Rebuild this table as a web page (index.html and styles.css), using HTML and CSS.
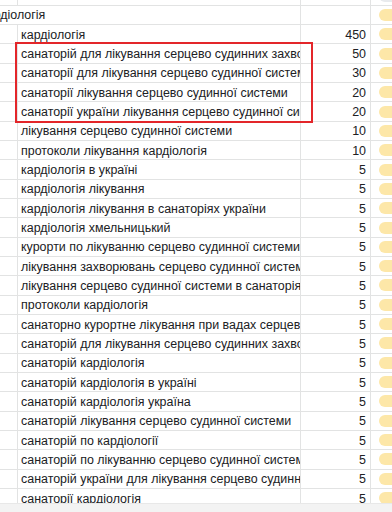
FILE: index.html
```html
<!DOCTYPE html>
<html lang="uk">
<head>
<meta charset="utf-8">
<title>Sheet</title>
<link rel="stylesheet" href="styles.css">
</head>
<body>
<div class="app">
  <div class="viewport">
    <div class="sheet">
      <div class="c a"></div><div class="c b"></div><div class="c n"></div><div class="c d"><span class="pill gray"></span></div>

      <div class="c ab">кардіологія</div><div class="c n"></div><div class="c d"><span class="pill"></span></div>

      <div class="c a"></div><div class="c b">кардіологія</div><div class="c n">450</div><div class="c d"><span class="pill"></span></div>
      <div class="c a"></div><div class="c b">санаторій для лікування серцево судинних захворювань</div><div class="c n">50</div><div class="c d"><span class="pill"></span></div>
      <div class="c a"></div><div class="c b">санаторії для лікування серцево судинної системи</div><div class="c n">30</div><div class="c d"><span class="pill"></span></div>
      <div class="c a"></div><div class="c b">санаторії лікування серцево судинної системи</div><div class="c n">20</div><div class="c d"><span class="pill"></span></div>
      <div class="c a"></div><div class="c b">санаторії україни лікування серцево судинної системи</div><div class="c n">20</div><div class="c d"><span class="pill"></span></div>
      <div class="c a"></div><div class="c b">лікування серцево судинної системи</div><div class="c n">10</div><div class="c d"><span class="pill"></span></div>
      <div class="c a"></div><div class="c b">протоколи лікування кардіологія</div><div class="c n">10</div><div class="c d"><span class="pill"></span></div>
      <div class="c a"></div><div class="c b">кардіологія в україні</div><div class="c n">5</div><div class="c d"><span class="pill"></span></div>
      <div class="c a"></div><div class="c b">кардіологія лікування</div><div class="c n">5</div><div class="c d"><span class="pill"></span></div>
      <div class="c a"></div><div class="c b">кардіологія лікування в санаторіях україни</div><div class="c n">5</div><div class="c d"><span class="pill"></span></div>
      <div class="c a"></div><div class="c b">кардіологія хмельницький</div><div class="c n">5</div><div class="c d"><span class="pill"></span></div>
      <div class="c a"></div><div class="c b">курорти по лікуванню серцево судинної системи</div><div class="c n">5</div><div class="c d"><span class="pill"></span></div>
      <div class="c a"></div><div class="c b">лікування захворювань серцево судинної системи</div><div class="c n">5</div><div class="c d"><span class="pill"></span></div>
      <div class="c a"></div><div class="c b">лікування серцево судинної системи в санаторіях</div><div class="c n">5</div><div class="c d"><span class="pill"></span></div>
      <div class="c a"></div><div class="c b">протоколи кардіологія</div><div class="c n">5</div><div class="c d"><span class="pill"></span></div>
      <div class="c a"></div><div class="c b">санаторно курортне лікування при вадах серцево судинної системи</div><div class="c n">5</div><div class="c d"><span class="pill"></span></div>
      <div class="c a"></div><div class="c b">санаторій для лікування серцево судинних захворювань</div><div class="c n">5</div><div class="c d"><span class="pill"></span></div>
      <div class="c a"></div><div class="c b">санаторій кардіологія</div><div class="c n">5</div><div class="c d"><span class="pill"></span></div>
      <div class="c a"></div><div class="c b">санаторій кардіологія в україні</div><div class="c n">5</div><div class="c d"><span class="pill"></span></div>
      <div class="c a"></div><div class="c b">санаторій кардіологія україна</div><div class="c n">5</div><div class="c d"><span class="pill"></span></div>
      <div class="c a"></div><div class="c b">санаторій лікування серцево судинної системи</div><div class="c n">5</div><div class="c d"><span class="pill"></span></div>
      <div class="c a"></div><div class="c b">санаторій по кардіології</div><div class="c n">5</div><div class="c d"><span class="pill"></span></div>
      <div class="c a"></div><div class="c b">санаторій по лікуванню серцево судинної системи</div><div class="c n">5</div><div class="c d"><span class="pill"></span></div>
      <div class="c a"></div><div class="c b">санаторій україни для лікування серцево судинної системи</div><div class="c n">5</div><div class="c d"><span class="pill"></span></div>
      <div class="c a"></div><div class="c b">санаторії кардіологія</div><div class="c n">5</div><div class="c d"><span class="pill"></span></div>
      <div class="c a"></div><div class="c b"></div><div class="c n"></div><div class="c d"><span class="pill"></span></div>
    </div>
    <div class="highlight"></div>
  </div>
  <div class="hscroll"></div>
</div>
</body>
</html>
```

FILE: styles.css
```css
html, body {
  margin: 0;
  padding: 0;
  background: #ffffff;
  overflow: hidden;
}

.app {
  width: 392px;
  height: 512px;
  display: flex;
  flex-direction: column;
}

.viewport {
  position: relative;
  flex: 1 1 auto;
  overflow: hidden;
}

.sheet {
  display: grid;
  grid-template-columns: 40px 283px 70px 60px;
  grid-auto-rows: 19.33px;
  margin-left: -22px;
  margin-top: -13.6px;
  font-family: "Liberation Sans", Arial, sans-serif;
  font-size: 12.45px;
  color: #202124;
}

.c {
  box-sizing: border-box;
  border-right: 1px solid #e2e3e3;
  border-bottom: 1px solid #e2e3e3;
  padding: 0 3px;
  white-space: nowrap;
  overflow: hidden;
  display: flex;
  align-items: center;
  min-width: 0;
  padding-top: 1px;
}

.ab {
  grid-column: span 2;
  padding-left: 3px;
}

.n {
  justify-content: flex-end;
  padding-right: 4px;
}

.d {
  padding-left: 8px;
  padding-right: 0;
  padding-top: 0;
}

.pill {
  display: block;
  width: 60px;
  height: 12px;
  flex: none;
  border-radius: 6px;
  background: #fde7a8;
}

.pill.gray {
  background: #e8eaed;
}

.highlight {
  position: absolute;
  left: 15px;
  top: 42px;
  width: 298px;
  height: 81px;
  box-sizing: border-box;
  border: 2px solid #e3262a;
  pointer-events: none;
}

.hscroll {
  flex: 0 0 9px;
  box-sizing: border-box;
  background: #f3f3f3;
  border-top: 1px solid #e8e8e8;
}
```
